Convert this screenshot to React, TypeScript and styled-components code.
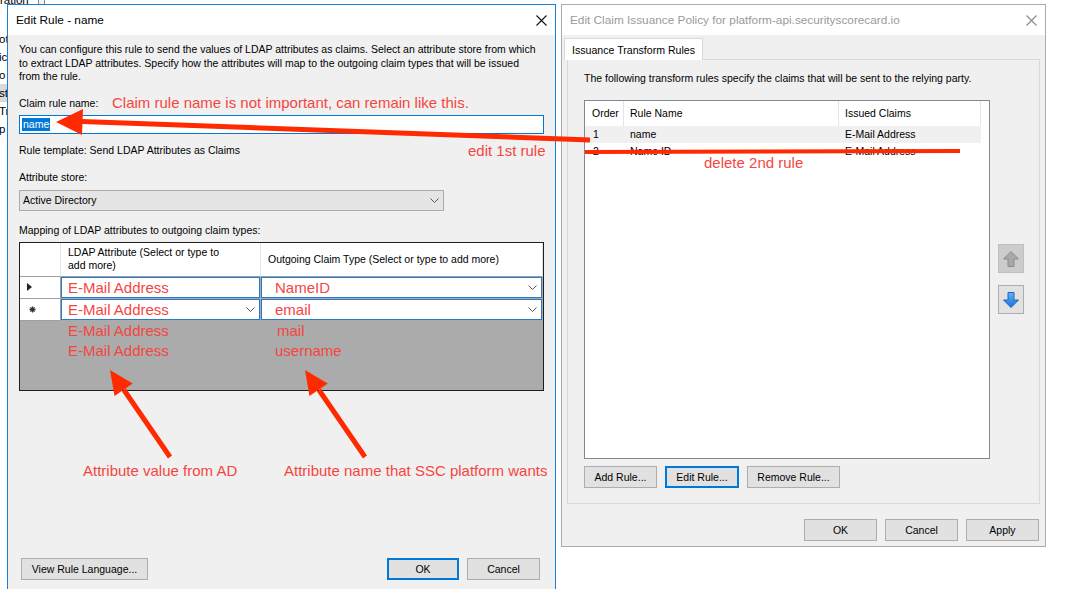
import React from "react";
import styled, { createGlobalStyle } from "styled-components";

const GlobalStyle = createGlobalStyle`
  * { box-sizing: border-box; }
  html, body { margin: 0; padding: 0; background: #fff; }
  body {
    font-family: "Liberation Sans", Arial, sans-serif;
    font-size: 10.5px;
    color: #000;
    overflow: hidden;
  }
`;

const Desktop = styled.div`
  position: relative;
  width: 1075px;
  height: 589px;
  overflow: hidden;
  background: #fff;
`;

/* window peeking out behind the dialogs */
const BackWindow = styled.div`
  position: absolute;
  left: 0;
  top: 0;
  width: 60px;
  height: 200px;
  font-size: 11.5px;
`;

const BackTop = styled.div`
  display: flex;
  align-items: flex-start;
  gap: 9px;
  margin-top: -6px;
  height: 13px;
  line-height: 13px;
`;

const BackBox = styled.div`
  width: 7px;
  height: 12px;
  border: 1px solid #8a8a8a;
  background: #f4f4f4;
`;

const BackList = styled.div`
  margin-top: 23px;
`;

const BackItem = styled.div<{ $selected?: boolean }>`
  height: 18px;
  line-height: 18px;
  margin-left: -2px;
  padding-left: 1px;
  background: ${(p) => (p.$selected ? "#d9d9d9" : "transparent")};
`;

const Window = styled.div<{ $x: number; $y: number; $w: number; $h: number; $active?: boolean }>`
  position: absolute;
  left: ${(p) => p.$x}px;
  top: ${(p) => p.$y}px;
  width: ${(p) => p.$w}px;
  height: ${(p) => p.$h}px;
  display: flex;
  flex-direction: column;
  background: #f0f0f0;
  border: 1px solid ${(p) => (p.$active ? "#1a7fd4" : "#aaaaaa")};
`;

const TitleBar = styled.div<{ $active?: boolean }>`
  flex: 0 0 30px;
  display: flex;
  align-items: center;
  justify-content: space-between;
  padding: 0 8px 0 8px;
  background: #fff;
  font-size: 11.8px;
  color: ${(p) => (p.$active ? "#000" : "#9a9a9a")};
`;

const RuleBody = styled.div`
  flex: 1;
  display: flex;
  flex-direction: column;
  padding: 0 11px;
`;

const Intro = styled.div<{ $gap: number }>`
  margin-top: ${(p) => p.$gap}px;
  line-height: 13.5px;
  white-space: nowrap;
`;

const FieldLabel = styled.div<{ $gap: number }>`
  margin-top: ${(p) => p.$gap}px;
  line-height: 14px;
  white-space: nowrap;
`;

const TextBox = styled.div`
  margin-top: 5px;
  height: 19px;
  border: 1px solid #0078d7;
  background: #fff;
  padding-left: 2px;
  display: flex;
  align-items: center;
`;

const SelectedText = styled.span`
  background: #0078d7;
  color: #fff;
  line-height: 13px;
  padding: 0 1px;
`;

const Combo = styled.div`
  margin-top: 6px;
  width: 425px;
  height: 21px;
  background: #e5e5e5;
  border: 1px solid #acacac;
  display: flex;
  align-items: center;
  justify-content: space-between;
  padding: 0 4px 0 3px;
`;

const MapGrid = styled.div`
  margin-top: 5px;
  height: 149px;
  border: 1px solid #1e1e1e;
  background: #ababab;
  display: grid;
  grid-template-columns: 41px 200px 1fr;
  grid-template-rows: 34px 22px 22px 20px 20px;
  align-content: start;
`;

const HeadCell = styled.div`
  background: #fff;
  border-right: 1px solid #e3e3e3;
  border-bottom: 1px solid #a0a0a0;
  padding-left: 7px;
  line-height: 13px;
  display: flex;
  align-items: center;
  white-space: nowrap;
`;

const RowHead = styled.div`
  background: #fff;
  border-right: 1px solid #a0a0a0;
  border-bottom: 1px solid #a0a0a0;
  display: flex;
  align-items: center;
  padding-left: 7px;
`;

const EditCell = styled.div<{ $pad: number }>`
  background: #fff;
  border: 1px solid #2a78c8;
  margin: 0 1px 1px 0;
  display: flex;
  align-items: center;
  justify-content: space-between;
  padding: 0 4px 0 ${(p) => p.$pad}px;
`;

const GhostCell = styled.div<{ $pad: number }>`
  display: flex;
  align-items: center;
  padding-left: ${(p) => p.$pad}px;
`;

const RedText = styled.span`
  font-size: 15px;
  color: #f6453f;
  white-space: nowrap;
`;

const Footer = styled.div<{ $gap: number; $right: number }>`
  margin-top: ${(p) => p.$gap}px;
  display: flex;
  align-items: center;
  gap: 8px;
  padding-right: ${(p) => p.$right}px;
`;

const Spacer = styled.div`
  flex: 1;
`;

const Button = styled.div<{ $w: number; $default?: boolean }>`
  width: ${(p) => p.$w}px;
  height: 22px;
  display: flex;
  align-items: center;
  justify-content: center;
  background: #e1e1e1;
  border: ${(p) => (p.$default ? "2px solid #0078d7" : "1px solid #adadad")};
  white-space: nowrap;
`;

/* right dialog */
const PolicyBody = styled.div`
  flex: 1;
  display: flex;
  flex-direction: column;
  padding: 3px 5px 0 5px;
`;

const Tab = styled.div`
  align-self: flex-start;
  margin-left: -3px;
  margin-bottom: -1px;
  height: 22px;
  padding: 0 7px;
  display: flex;
  align-items: center;
  background: #fff;
  border: 1px solid #d9d9d9;
  border-bottom: none;
  position: relative;
  z-index: 1;
  font-size: 10.6px;
`;

const TabPanel = styled.div`
  border: 1px solid #d9d9d9;
  background: #f0f0f0;
  padding: 12px 0 15px 16px;
  display: flex;
  flex-direction: column;
`;

const ListRow = styled.div`
  margin-top: 14px;
  display: flex;
  gap: 8px;
`;

const ListView = styled.div`
  width: 406px;
  height: 359px;
  border: 1px solid #828790;
  background: #fff;
`;

const ListGrid = styled.div<{ $h: number; $selected?: boolean }>`
  display: grid;
  grid-template-columns: 39px 215px 142px;
  height: ${(p) => p.$h}px;
  background: ${(p) => (p.$selected ? "#f0f0f0" : "transparent")};
  width: 396px;
`;

const ListHead = styled.div<{ $pad: number }>`
  display: flex;
  align-items: center;
  padding-left: ${(p) => p.$pad}px;
  border-right: 1px solid #e5e5e5;
`;

const ListCell = styled.div<{ $pad: number }>`
  display: flex;
  align-items: center;
  padding-left: ${(p) => p.$pad}px;
  white-space: nowrap;
`;

const SideButtons = styled.div`
  align-self: center;
  display: flex;
  flex-direction: column;
  gap: 12px;
`;

const MoveButton = styled.div<{ $disabled?: boolean }>`
  width: 26px;
  height: 29px;
  display: flex;
  align-items: center;
  justify-content: center;
  background: ${(p) => (p.$disabled ? "#cccccc" : "#e1e1e1")};
  border: 1px solid ${(p) => (p.$disabled ? "#bfbfbf" : "#adadad")};
`;

const ButtonRow = styled.div`
  margin-top: 7px;
  display: flex;
  gap: 8px;
`;

/* annotations on top of the screenshot */
const Overlay = styled.svg`
  position: absolute;
  left: 0;
  top: 0;
  pointer-events: none;
`;

const Note = styled.span<{ $x: number; $y: number }>`
  position: absolute;
  left: ${(p) => p.$x}px;
  top: ${(p) => p.$y}px;
  font-size: 15px;
  line-height: 17px;
  color: #f6453f;
  white-space: nowrap;
`;

const Chevron = () => (
  <svg width="9" height="5" viewBox="0 0 9 5">
    <path d="M0.5 0.5 L4.5 4.5 L8.5 0.5" fill="none" stroke="#555" strokeWidth="1" />
  </svg>
);

const CloseIcon = ({ color }: { color: string }) => (
  <svg width="11" height="11" viewBox="0 0 11 11">
    <path d="M0.5 0.5 L10.5 10.5 M10.5 0.5 L0.5 10.5" stroke={color} strokeWidth="1.1" />
  </svg>
);

const RowPointer = () => (
  <svg width="5" height="8" viewBox="0 0 5 8">
    <path d="M0 0 L5 4 L0 8 Z" fill="#222" />
  </svg>
);

const NewRowMark = () => (
  <svg width="7" height="7" viewBox="0 0 7 7" style={{ marginLeft: 2 }}>
    <path d="M3.5 0.5V6.5 M0.5 3.5H6.5 M1.4 1.4L5.6 5.6 M5.6 1.4L1.4 5.6" stroke="#333" strokeWidth="1.3" />
  </svg>
);

const BlockArrow = ({ up }: { up?: boolean }) => (
  <svg width="16" height="16" viewBox="0 0 16 16">
    <defs>
      <linearGradient id="blueArrow" x1="0" y1="0" x2="0" y2="1">
        <stop offset="0" stopColor="#5fb2f5" />
        <stop offset="1" stopColor="#1a72d6" />
      </linearGradient>
    </defs>
    {up ? (
      <path d="M8 0.5 L15.5 8 H11 V15.5 H5 V8 H0.5 Z" fill="#a8a8a8" stroke="#8c8c8c" strokeWidth="1" />
    ) : (
      <path d="M8 15.5 L15.5 8 H11 V0.5 H5 V8 H0.5 Z" fill="url(#blueArrow)" stroke="#1b66c0" strokeWidth="1" />
    )}
  </svg>
);

const ARROW = "#ff2a00";

export default function App() {
  return (
    <>
      <GlobalStyle />
      <Desktop>
        <BackWindow>
          <BackTop>
            <span>ration</span>
            <BackBox />
          </BackTop>
          <BackList>
            {["ot", "ic", "o", "st", "Tr", "p"].map((t) => (
              <BackItem key={t} $selected={t === "st"}>
                {t}
              </BackItem>
            ))}
          </BackList>
        </BackWindow>

        <Window $x={7} $y={4} $w={549} $h={610} $active>
          <TitleBar $active>
            <span>Edit Rule - name</span>
            <CloseIcon color="#111" />
          </TitleBar>
          <RuleBody>
            <Intro $gap={8}>
              You can configure this rule to send the values of LDAP attributes as claims. Select an attribute store from which
              <br />
              to extract LDAP attributes. Specify how the attributes will map to the outgoing claim types that will be issued
              <br />
              from the rule.
            </Intro>
            <FieldLabel $gap={12}>Claim rule name:</FieldLabel>
            <TextBox>
              <SelectedText>name</SelectedText>
            </TextBox>
            <FieldLabel $gap={9}>Rule template: Send LDAP Attributes as Claims</FieldLabel>
            <FieldLabel $gap={13}>Attribute store:</FieldLabel>
            <Combo>
              <span>Active Directory</span>
              <Chevron />
            </Combo>
            <FieldLabel $gap={12}>Mapping of LDAP attributes to outgoing claim types:</FieldLabel>
            <MapGrid>
              <HeadCell />
              <HeadCell>
                LDAP Attribute (Select or type to
                <br />
                add more)
              </HeadCell>
              <HeadCell>Outgoing Claim Type (Select or type to add more)</HeadCell>

              <RowHead>
                <RowPointer />
              </RowHead>
              <EditCell $pad={6}>
                <RedText>E-Mail Address</RedText>
              </EditCell>
              <EditCell $pad={13}>
                <RedText>NameID</RedText>
                <Chevron />
              </EditCell>

              <RowHead>
                <NewRowMark />
              </RowHead>
              <EditCell $pad={6}>
                <RedText>E-Mail Address</RedText>
                <Chevron />
              </EditCell>
              <EditCell $pad={13}>
                <RedText>email</RedText>
                <Chevron />
              </EditCell>

              <GhostCell $pad={0} />
              <GhostCell $pad={7}>
                <RedText>E-Mail Address</RedText>
              </GhostCell>
              <GhostCell $pad={16}>
                <RedText>mail</RedText>
              </GhostCell>

              <GhostCell $pad={0} />
              <GhostCell $pad={7}>
                <RedText>E-Mail Address</RedText>
              </GhostCell>
              <GhostCell $pad={14}>
                <RedText>username</RedText>
              </GhostCell>
            </MapGrid>
            <Footer $gap={167} $right={4}>
              <Button $w={127} style={{ marginLeft: 2 }}>
                View Rule Language...
              </Button>
              <Spacer />
              <Button $w={72} $default>
                OK
              </Button>
              <Button $w={73}>Cancel</Button>
            </Footer>
          </RuleBody>
        </Window>

        <Window $x={561} $y={4} $w={485} $h={543}>
          <TitleBar>
            <span>Edit Claim Issuance Policy for platform-api.securityscorecard.io</span>
            <CloseIcon color="#8a8a8a" />
          </TitleBar>
          <PolicyBody>
            <Tab>Issuance Transform Rules</Tab>
            <TabPanel>
              <Intro $gap={0}>
                The following transform rules specify the claims that will be sent to the relying party.
              </Intro>
              <ListRow>
                <ListView>
                  <ListGrid $h={25}>
                    <ListHead $pad={7}>Order</ListHead>
                    <ListHead $pad={6}>Rule Name</ListHead>
                    <ListHead $pad={6}>Issued Claims</ListHead>
                  </ListGrid>
                  <ListGrid $h={17} $selected>
                    <ListCell $pad={8}>1</ListCell>
                    <ListCell $pad={6}>name</ListCell>
                    <ListCell $pad={6}>E-Mail Address</ListCell>
                  </ListGrid>
                  <ListGrid $h={17}>
                    <ListCell $pad={8}>2</ListCell>
                    <ListCell $pad={6}>Name ID</ListCell>
                    <ListCell $pad={6}>E-Mail Address</ListCell>
                  </ListGrid>
                </ListView>
                <SideButtons>
                  <MoveButton $disabled>
                    <BlockArrow up />
                  </MoveButton>
                  <MoveButton>
                    <BlockArrow />
                  </MoveButton>
                </SideButtons>
              </ListRow>
              <ButtonRow>
                <Button $w={73}>Add Rule...</Button>
                <Button $w={74} $default>
                  Edit Rule...
                </Button>
                <Button $w={93}>Remove Rule...</Button>
              </ButtonRow>
            </TabPanel>
            <Footer $gap={15} $right={1}>
              <Spacer />
              <Button $w={73}>OK</Button>
              <Button $w={73}>Cancel</Button>
              <Button $w={73}>Apply</Button>
            </Footer>
          </PolicyBody>
        </Window>

        <Overlay width={1075} height={589} viewBox="0 0 1075 589">
          <line x1={82} y1={121.5} x2={590} y2={140} stroke={ARROW} strokeWidth={5} />
          <polygon points="56,122 83,109 82,135" fill={ARROW} />
          <line x1={585} y1={152} x2={960} y2={151} stroke={ARROW} strokeWidth={4} />
          <line x1={170} y1={457} x2={124} y2={390} stroke={ARROW} strokeWidth={5} />
          <polygon points="110,370 132.7,383.6 114.5,396" fill={ARROW} />
          <line x1={365} y1={457} x2={319} y2={390} stroke={ARROW} strokeWidth={5} />
          <polygon points="305,370 327.7,383.6 309.5,396" fill={ARROW} />
        </Overlay>
        <Note $x={112} $y={94}>Claim rule name is not important, can remain like this.</Note>
        <Note $x={468} $y={142}>edit 1st rule</Note>
        <Note $x={704} $y={154}>delete 2nd rule</Note>
        <Note $x={83} $y={462}>Attribute value from AD</Note>
        <Note $x={284} $y={462}>Attribute name that SSC platform wants</Note>
      </Desktop>
    </>
  );
}
